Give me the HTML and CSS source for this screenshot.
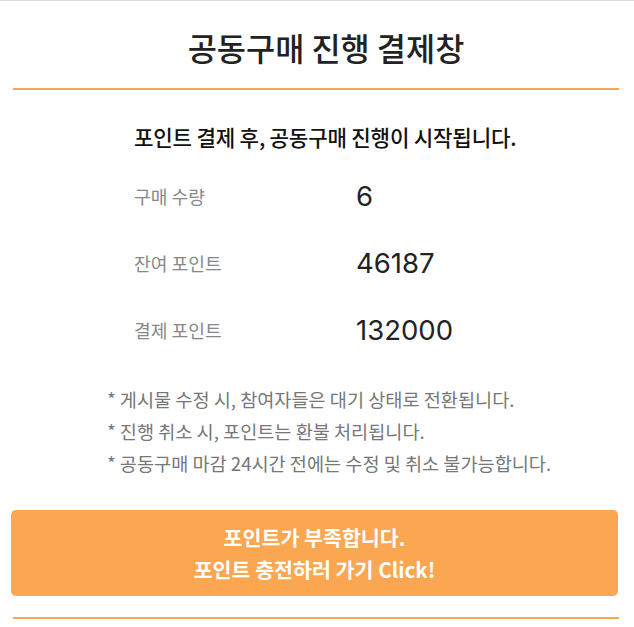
FILE: index.html
```html
<html>

<head>
  <meta content="text/html;charset=utf-8" http-equiv="Content-Type" />
  <link rel="stylesheet" href="styles.css">
</head>

<body>
  <div class="sheet">
    <div class="sheet-head">
      <h1>공동구매 진행 결제창</h1>
    </div>

    <div class="sheet-body">
      <p class="lead">포인트 결제 후, 공동구매 진행이 시작됩니다.</p>

      <div class="rows">
        <div class="row">
          <span class="label">구매 수량</span>
          <span class="value">6</span>
        </div>
        <div class="row">
          <span class="label">잔여 포인트</span>
          <span class="value">46187</span>
        </div>
        <div class="row">
          <span class="label">결제 포인트</span>
          <span class="value">132000</span>
        </div>
      </div>

      <ul class="notes">
        <li>* 게시물 수정 시, 참여자들은 대기 상태로 전환됩니다.</li>
        <li>* 진행 취소 시, 포인트는 환불 처리됩니다.</li>
        <li>* 공동구매 마감 24시간 전에는 수정 및 취소 불가능합니다.</li>
      </ul>
    </div>

    <button class="charge">포인트가 부족합니다.<br />포인트 충전하러 가기 Click!</button>

    <div class="sheet-foot"></div>
  </div>
</body>

</html>
```

FILE: styles.css
```css
html {
  margin: 0;
  font-family: "Noto Sans CJK KR", "Noto Sans", sans-serif;
}

body {
  margin: 0;
  border-top: 1px solid #dddddd;
  background: #ffffff;
}

.sheet {
  width: 608px;
  margin-left: 11px;
}

.sheet-head {
  height: 87px;
  margin-left: 2px;
  padding-left: 20px;
  display: flex;
  align-items: center;
  justify-content: center;
  border-bottom: 2px solid #fba651;
}

h1 {
  margin: 0;
  padding-top: 4px;
  font-size: 31.7px;
  font-weight: 500;
  color: #222222;
}

.sheet-body {
  padding-left: 96px;
}

.lead {
  margin: 0;
  padding-left: 27px;
  height: 94px;
  line-height: 94px;
  font-size: 21.2px;
  font-weight: 500;
  letter-spacing: -0.2px;
  color: #111111;
}

.rows {
  padding-left: 27px;
}

.row {
  display: flex;
  align-items: center;
  height: 67px;
}

.row:first-child {
  margin-top: -22px;
}

.label {
  width: 222px;
  font-size: 18.2px;
  color: #888888;
}

.value {
  font-family: Inter, "Noto Sans", sans-serif;
  font-size: 27.5px;
  color: #222222;
}

.notes {
  list-style: none;
  margin: 0;
  padding: 20px 0 0 0;
}

.notes li {
  height: 32px;
  line-height: 32px;
  font-size: 18.6px;
  color: #777777;
}

.charge {
  display: block;
  width: 607px;
  height: 86px;
  margin-top: 31px;
  padding: 0;
  border: none;
  border-radius: 5px;
  background: #fba651;
  color: #ffffff;
  font-family: "Noto Sans CJK KR", "Noto Sans", sans-serif;
  font-size: 20.6px;
  font-weight: 700;
  line-height: 32px;
}

.sheet-foot {
  margin: 21px 0 0 2px;
  border-bottom: 2px solid #fba651;
}
```
